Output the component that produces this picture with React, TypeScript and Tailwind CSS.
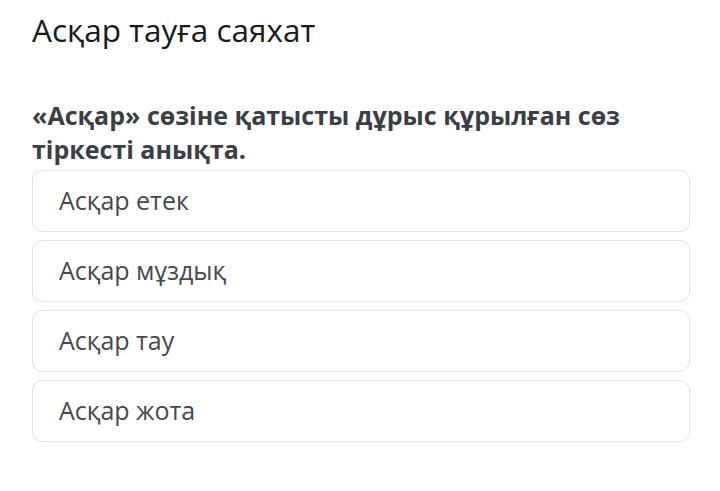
const options = ["Асқар етек", "Асқар мұздық", "Асқар тау", "Асқар жота"];

export default function App() {
  return (
    <div className="w-[720px] h-[491px] bg-white font-['Open_Sans',sans-serif]">
      <div className="pl-8 pr-[30px] pt-[9px]">
        <h1 className="text-[31.5px] leading-[42px] text-[#1a1a1a]">Асқар тауға саяхат</h1>
        <p className="mt-[47px] text-[25px] leading-[34px] font-bold text-[#3b3e44]">
          «Асқар» сөзіне қатысты дұрыс құрылған сөз тіркесті анықта.
        </p>
        <div className="flex flex-col gap-2 mt-[4px]">
          {options.map(o => (
            <div
              key={o}
              className="h-[62px] flex items-center pl-[26px] border border-[#e3e3e3] rounded-[10px] text-[25px] text-[#45484d]"
            >
              {o}
            </div>
          ))}
        </div>
      </div>
    </div>
  );
}
